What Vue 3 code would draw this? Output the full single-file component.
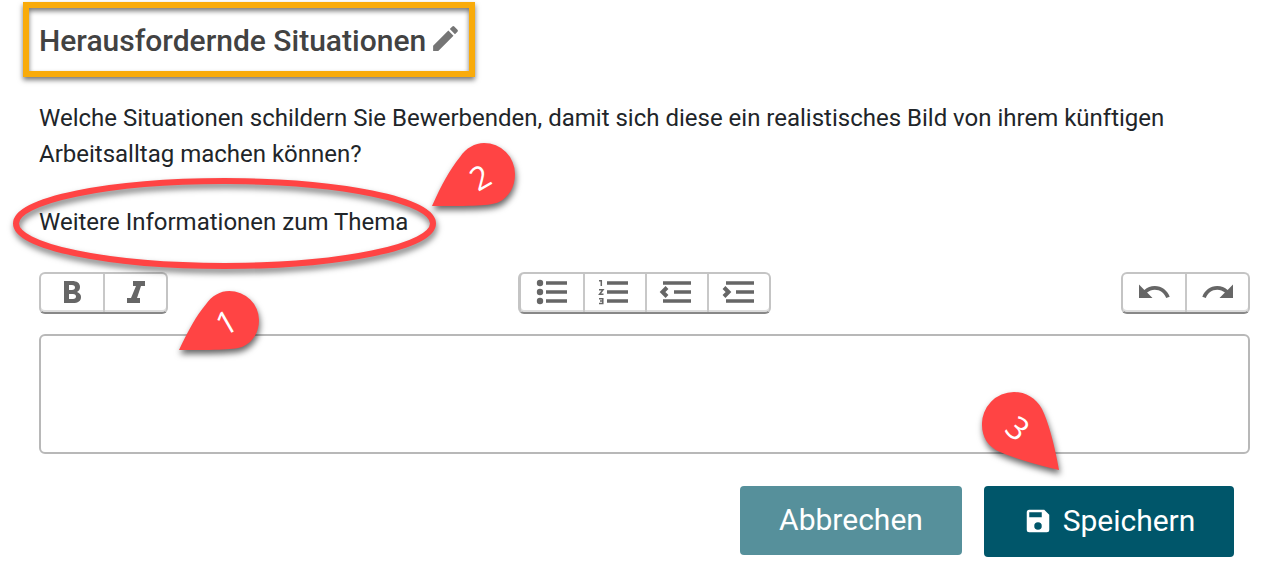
<script setup>
import { ref } from 'vue'

const text = ref('')
</script>

<template>
  <main class="page">
    <header class="title">
      <h1>Herausfordernde Situationen</h1>
      <button class="edit" type="button" aria-label="Titel bearbeiten">
        <svg width="33" height="33" viewBox="0 0 24 24"><path d="M3 17.25V21h3.75L17.81 9.94l-3.75-3.75L3 17.25zM20.71 7.04a1 1 0 0 0 0-1.41l-2.34-2.34a1 1 0 0 0-1.41 0l-1.83 1.83 3.75 3.75 1.83-1.83z" /></svg>
      </button>
    </header>

    <p class="question" id="question">
      Welche Situationen schildern Sie Bewerbenden, damit sich diese ein realistisches Bild von ihrem künftigen Arbeitsalltag machen können?
    </p>

    <div class="more">
      <a href="#thema">Weitere Informationen zum Thema</a>
      <svg class="ring" width="436" height="104" viewBox="0 0 436 104"><ellipse cx="212.5" cy="46.5" rx="208.5" ry="42.5" /></svg>
      <div class="pin pin-two">
        <svg width="83" height="64" viewBox="0 0 83 64"><path d="M0 63 C9 43 18 26 28 14 C34 5 43 0 52 0 A31 31 0 0 1 83 31 C83 44 77 54 67 59 C59 63 40 63 0 63Z" /></svg>
        <span>2</span>
      </div>
    </div>

    <div class="toolbar" role="toolbar" aria-label="Textformatierung">
      <div class="group">
        <button type="button" aria-label="Fett">
          <svg width="36" height="36" viewBox="0 0 36 36"><path fill-rule="evenodd" d="M10 7h8c5 0 8 2 8 6 0 2-1 4-3 5 3 1 4 3 4 5 0 4-3 6-8 6h-9zM15 11v5h3c4 0 4-5 0-5zM15 20v5h4c4 0 4-5 0-5z" /></svg>
        </button>
        <button type="button" aria-label="Kursiv">
          <svg width="36" height="36" viewBox="0 0 36 36"><path d="M15 7h12v5h-4l-4 12h3v5H9v-5h4l5-12h-3z" /></svg>
        </button>
      </div>
      <div class="group lists">
        <button type="button" aria-label="Aufzählung">
          <svg width="36" height="36" viewBox="0 0 36 36"><path d="M12 7.2h21v3.6H12zM12 16.2h21v3.6H12zM12 25.2h21v3.6H12z" /><circle cx="6" cy="9" r="3.2" /><circle cx="6" cy="18" r="3.2" /><circle cx="6" cy="27" r="3.2" /></svg>
        </button>
        <button type="button" aria-label="Nummerierung">
          <svg width="36" height="36" viewBox="0 0 36 36"><path d="M10 7.2h21v3.6H10zM10 16.2h21v3.6H10zM10 25.2h21v3.6H10z" /><path class="line" d="M2 6.8h2.3V12M2 15.8h4L2.6 20.3H6.5M2 24.8h3.8v4.6H2M3 27.1h2.8" /></svg>
        </button>
        <button type="button" aria-label="Einzug verkleinern">
          <svg width="36" height="36" viewBox="0 0 36 36"><path d="M4 7.2h28v3.6H4zM15 16.2h17v3.6H15zM4 25.2h28v3.6H4z" /><path class="chevron" d="M8 13.5L3.5 18l4.500 4.500" /></svg>
        </button>
        <button type="button" aria-label="Einzug vergrößern">
          <svg width="36" height="36" viewBox="0 0 36 36"><path d="M5 7.2h28v3.6H5zM15 16.2h18v3.6H15zM5 25.2h28v3.6H5z" /><path class="chevron" d="M3 13.5L7.500 18 3 22.500" /></svg>
        </button>
      </div>
      <div class="group">
        <button type="button" aria-label="Rückgängig">
          <svg width="36" height="36" viewBox="0 0 24 24"><path d="M12.5 8c-2.65 0-5.05.99-6.9 2.6L2 7v9h9l-3.62-3.62c1.39-1.16 3.16-1.88 5.12-1.88 3.54 0 6.55 2.31 7.6 5.5l2.37-.78C21.08 11.03 17.15 8 12.5 8z" /></svg>
        </button>
        <button type="button" aria-label="Wiederholen">
          <svg width="36" height="36" viewBox="0 0 24 24"><path d="M18.4 10.6C16.55 8.99 14.15 8 11.5 8c-4.65 0-8.58 3.03-9.96 7.22L3.9 16c1.05-3.19 4.05-5.5 7.6-5.5 1.95 0 3.73.72 5.12 1.88L13 16h9V7l-3.6 3.6z" /></svg>
        </button>
      </div>
    </div>

    <div class="field">
      <textarea v-model="text" aria-labelledby="question"></textarea>
      <div class="pin pin-one">
        <svg width="80" height="60" viewBox="0 0 83 64" preserveAspectRatio="none"><path d="M0 63 C9 43 18 26 28 14 C34 5 43 0 52 0 A31 31 0 0 1 83 31 C83 44 77 54 67 59 C59 63 40 63 0 63Z" /></svg>
        <span>1</span>
      </div>
      <div class="pin pin-three">
        <svg width="78" height="78" viewBox="0 0 78 78"><path d="M77 78 C51 72 32 66 18 60 C6 55 0 45 0 33 A32 32 0 0 1 32 0 C44 0 54 6 60 17 C66 29 72 50 77 78Z" /></svg>
        <span>3</span>
      </div>
    </div>

    <footer class="actions">
      <button class="cancel" type="button">Abbrechen</button>
      <button class="save" type="button">
        <svg width="30" height="30" viewBox="0 0 24 24"><path d="M17 3H5a2 2 0 0 0-2 2v14a2 2 0 0 0 2 2h14a2 2 0 0 0 2-2V7l-4-4zm-5 16a3 3 0 1 1 0-6 3 3 0 0 1 0 6zm3-10H5V5h10v4z" /></svg>
        Speichern
      </button>
    </footer>
  </main>
</template>

<style>
body {
  background: #fff;
}
</style>

<style scoped>
.page {
  box-sizing: border-box;
  padding: 2px 13px 24px 39px;
  font-family: Roboto, "Liberation Sans", sans-serif;
  font-size: 24px;
  line-height: 36px;
  color: #212529;
}
button {
  margin: 0;
  border: 0;
  padding: 0;
  background: none;
  font-family: inherit;
  cursor: pointer;
}
svg {
  display: block;
  fill: #666;
}
.title {
  display: flex;
  align-items: flex-start;
  gap: 3px;
  box-sizing: border-box;
  width: fit-content;
  height: 75px;
  margin-left: -16px;
  padding: 14px 7px 0 10px;
  border: 6px solid #f9ab0b;
  box-shadow: 0 3px 5px #0008, inset 0 3px 5px #0008;
}
h1 {
  margin: 0;
  font-size: 30px;
  font-weight: 500;
  line-height: 38px;
  color: #424242;
}
.edit svg {
  fill: #757575;
}
.question {
  margin: 23px 0 32px;
}
.more {
  position: relative;
  width: fit-content;
}
.more a {
  color: inherit;
  text-decoration: none;
}
.ring {
  position: absolute;
  left: -27px;
  top: -27px;
  pointer-events: none;
  filter: drop-shadow(1px 4px 3px #0008);
}
.ring ellipse {
  fill: none;
  stroke: #ff4444;
  stroke-width: 6;
}
.toolbar {
  display: flex;
  justify-content: space-between;
  margin-top: 32px;
}
.group {
  display: flex;
  box-sizing: border-box;
  height: 42px;
  border: 2px solid #c4c4c4;
  border-bottom-color: #888;
  border-radius: 6px;
  box-shadow: inset 0 -2px #ddd;
}
.group button {
  display: flex;
  align-items: center;
  justify-content: center;
  width: 62px;
  padding-bottom: 2px;
}
.group button + button {
  border-left: 2px solid #c8c8c8;
  width: 63px;
}
.lists {
  border-left-width: 3px;
}
.lists button,
.lists button + button {
  width: 62px;
}
.line {
  fill: none;
  stroke: #666;
  stroke-width: 1.5;
}
.chevron {
  fill: none;
  stroke: #666;
  stroke-width: 4;
}
.field {
  position: relative;
  margin-top: 20px;
}
textarea {
  display: block;
  box-sizing: border-box;
  width: 100%;
  height: 120px;
  padding: 12px;
  border: 2px solid #b8b8b8;
  border-radius: 6px;
  font: inherit;
  color: inherit;
  resize: none;
  outline: none;
}
.pin {
  position: absolute;
  display: grid;
  pointer-events: none;
}
.pin svg {
  fill: #ff4444;
  filter: drop-shadow(1px 4px 3px #0009);
}
.pin span {
  position: absolute;
  width: 36px;
  text-align: center;
  color: #fff;
  font-family: "Open Sans", sans-serif;
  font-size: 32px;
  font-weight: 500;
  line-height: 36px;
  transform: rotate(-30deg);
}
.pin-two {
  left: 393px;
  top: -61px;
}
.pin-two span {
  left: 30px;
  top: 16px;
}
.pin-one {
  left: 140px;
  top: -43px;
}
.pin-one span {
  left: 29px;
  top: 13px;
}
.pin-three {
  left: 943px;
  top: 58px;
}
.pin-three span {
  left: 18px;
  top: 18px;
  transform: rotate(42deg);
}
.actions {
  display: flex;
  justify-content: flex-end;
  gap: 22px;
  margin: 32px 16px 0 0;
}
.actions button {
  padding-bottom: 2px;
  border-radius: 4px;
  color: #fff;
  font-size: 30px;
  line-height: 36px;
}
.cancel {
  width: 222px;
  height: 69px;
  background: #56909b;
}
.save {
  display: flex;
  align-items: center;
  justify-content: center;
  gap: 10px;
  width: 250px;
  height: 71px;
  background: #00566a;
}
.save svg {
  fill: #fff;
}
</style>
